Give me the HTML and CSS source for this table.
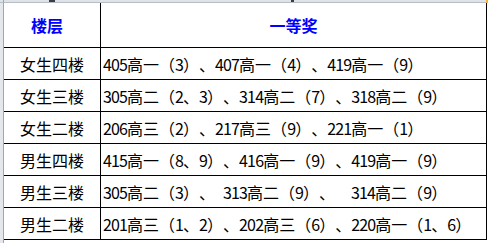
FILE: index.html
```html
<!DOCTYPE html>
<html>
<head>
<meta charset="utf-8">
<link rel="stylesheet" href="styles.css">
</head>
<body>
<div class="sheet">
  <div class="corner"></div>
  <div class="colbar"><span class="tick t1"></span><span class="tick t2"></span><span class="sel"></span></div>
  <div class="rowbar"></div>
  <div class="table">
    <div class="cell head c1 h1">楼层</div>
    <div class="cell head c2">一等奖</div>
    <div class="cell c1">女生四楼</div>
    <div class="cell c2"><span class="n">405</span>高一（<span class="n">3</span>）、<span class="n">407</span>高一（<span class="n">4</span>）、<span class="n">419</span>高一（<span class="n">9</span>）</div>
    <div class="cell c1">女生三楼</div>
    <div class="cell c2"><span class="n">305</span>高二（<span class="n">2</span>、<span class="n">3</span>）、<span class="n">314</span>高二（<span class="n">7</span>）、<span class="n">318</span>高二（<span class="n">9</span>）</div>
    <div class="cell c1">女生二楼</div>
    <div class="cell c2"><span class="n">206</span>高三（<span class="n">2</span>）、<span class="n">217</span>高三（<span class="n">9</span>）、<span class="n">221</span>高一（<span class="n">1</span>）</div>
    <div class="cell c1">男生四楼</div>
    <div class="cell c2"><span class="n">415</span>高一（<span class="n">8</span>、<span class="n">9</span>）、<span class="n">416</span>高一（<span class="n">9</span>）、<span class="n">419</span>高一（<span class="n">9</span>）</div>
    <div class="cell c1">男生三楼</div>
    <div class="cell c2"><span class="n">305</span>高二（<span class="n">3</span>）、 <span class="n">313</span>高二（<span class="n">9</span>）、  <span class="n">314</span>高二（<span class="n">9</span>）</div>
    <div class="cell c1">男生二楼</div>
    <div class="cell c2"><span class="n">201</span>高三（<span class="n">1</span>、<span class="n">2</span>）、<span class="n">202</span>高三（<span class="n">6</span>）、<span class="n">220</span>高一（<span class="n">1</span>、<span class="n">6</span>）</div>
  </div>
</div>
</body>
</html>
```

FILE: styles.css
```css
html, body {
  margin: 0;
  padding: 0;
  background: #ffffff;
}
.sheet {
  display: grid;
  grid-template-columns: 4px 1fr;
  grid-template-rows: 3px 1fr;
  width: 488px;
  height: 243px;
  overflow: hidden;
}
.corner {
  background: #dfe3e8;
  border-right: 1px solid #9ea6b2;
  border-bottom: 1px solid #b7bec8;
  box-sizing: border-box;
}
.colbar {
  background: #dfe3e8;
  border-bottom: 1px solid #b7bec8;
  box-sizing: border-box;
  display: flex;
  align-items: flex-start;
}
.tick {
  display: block;
  height: 2px;
  background: #3a3f46;
}
.t1 {
  width: 6px;
  margin-left: 45px;
}
.t2 {
  width: 3px;
  margin-left: 236px;
}
.sel {
  display: block;
  width: 2px;
  height: 3px;
  margin-left: auto;
  background: #f2b53c;
}
.rowbar {
  background: #e4e7ec;
  border-right: 1px solid #9ea6b2;
  box-sizing: border-box;
}
.table {
  display: grid;
  grid-template-columns: 97px 386px;
  grid-template-rows: 45px repeat(6, 32px);
  align-content: start;
}
.cell {
  box-sizing: border-box;
  border-right: 1px solid #000;
  border-bottom: 1px solid #000;
  display: flex;
  align-items: center;
  font-family: "Noto Sans CJK SC", sans-serif;
  font-size: 16px;
  color: #000;
  white-space: pre;
  overflow: hidden;
  text-spacing-trim: space-all;
}
.n {
  letter-spacing: -0.87px;
}
.c1 {
  justify-content: center;
}
.c2 {
  padding-left: 2px;
  word-spacing: 4.4px;
}
.head {
  color: #0000ff;
  font-weight: bold;
  justify-content: center;
  padding-left: 0;
}
.h1 {
  padding-right: 10px;
}
```
